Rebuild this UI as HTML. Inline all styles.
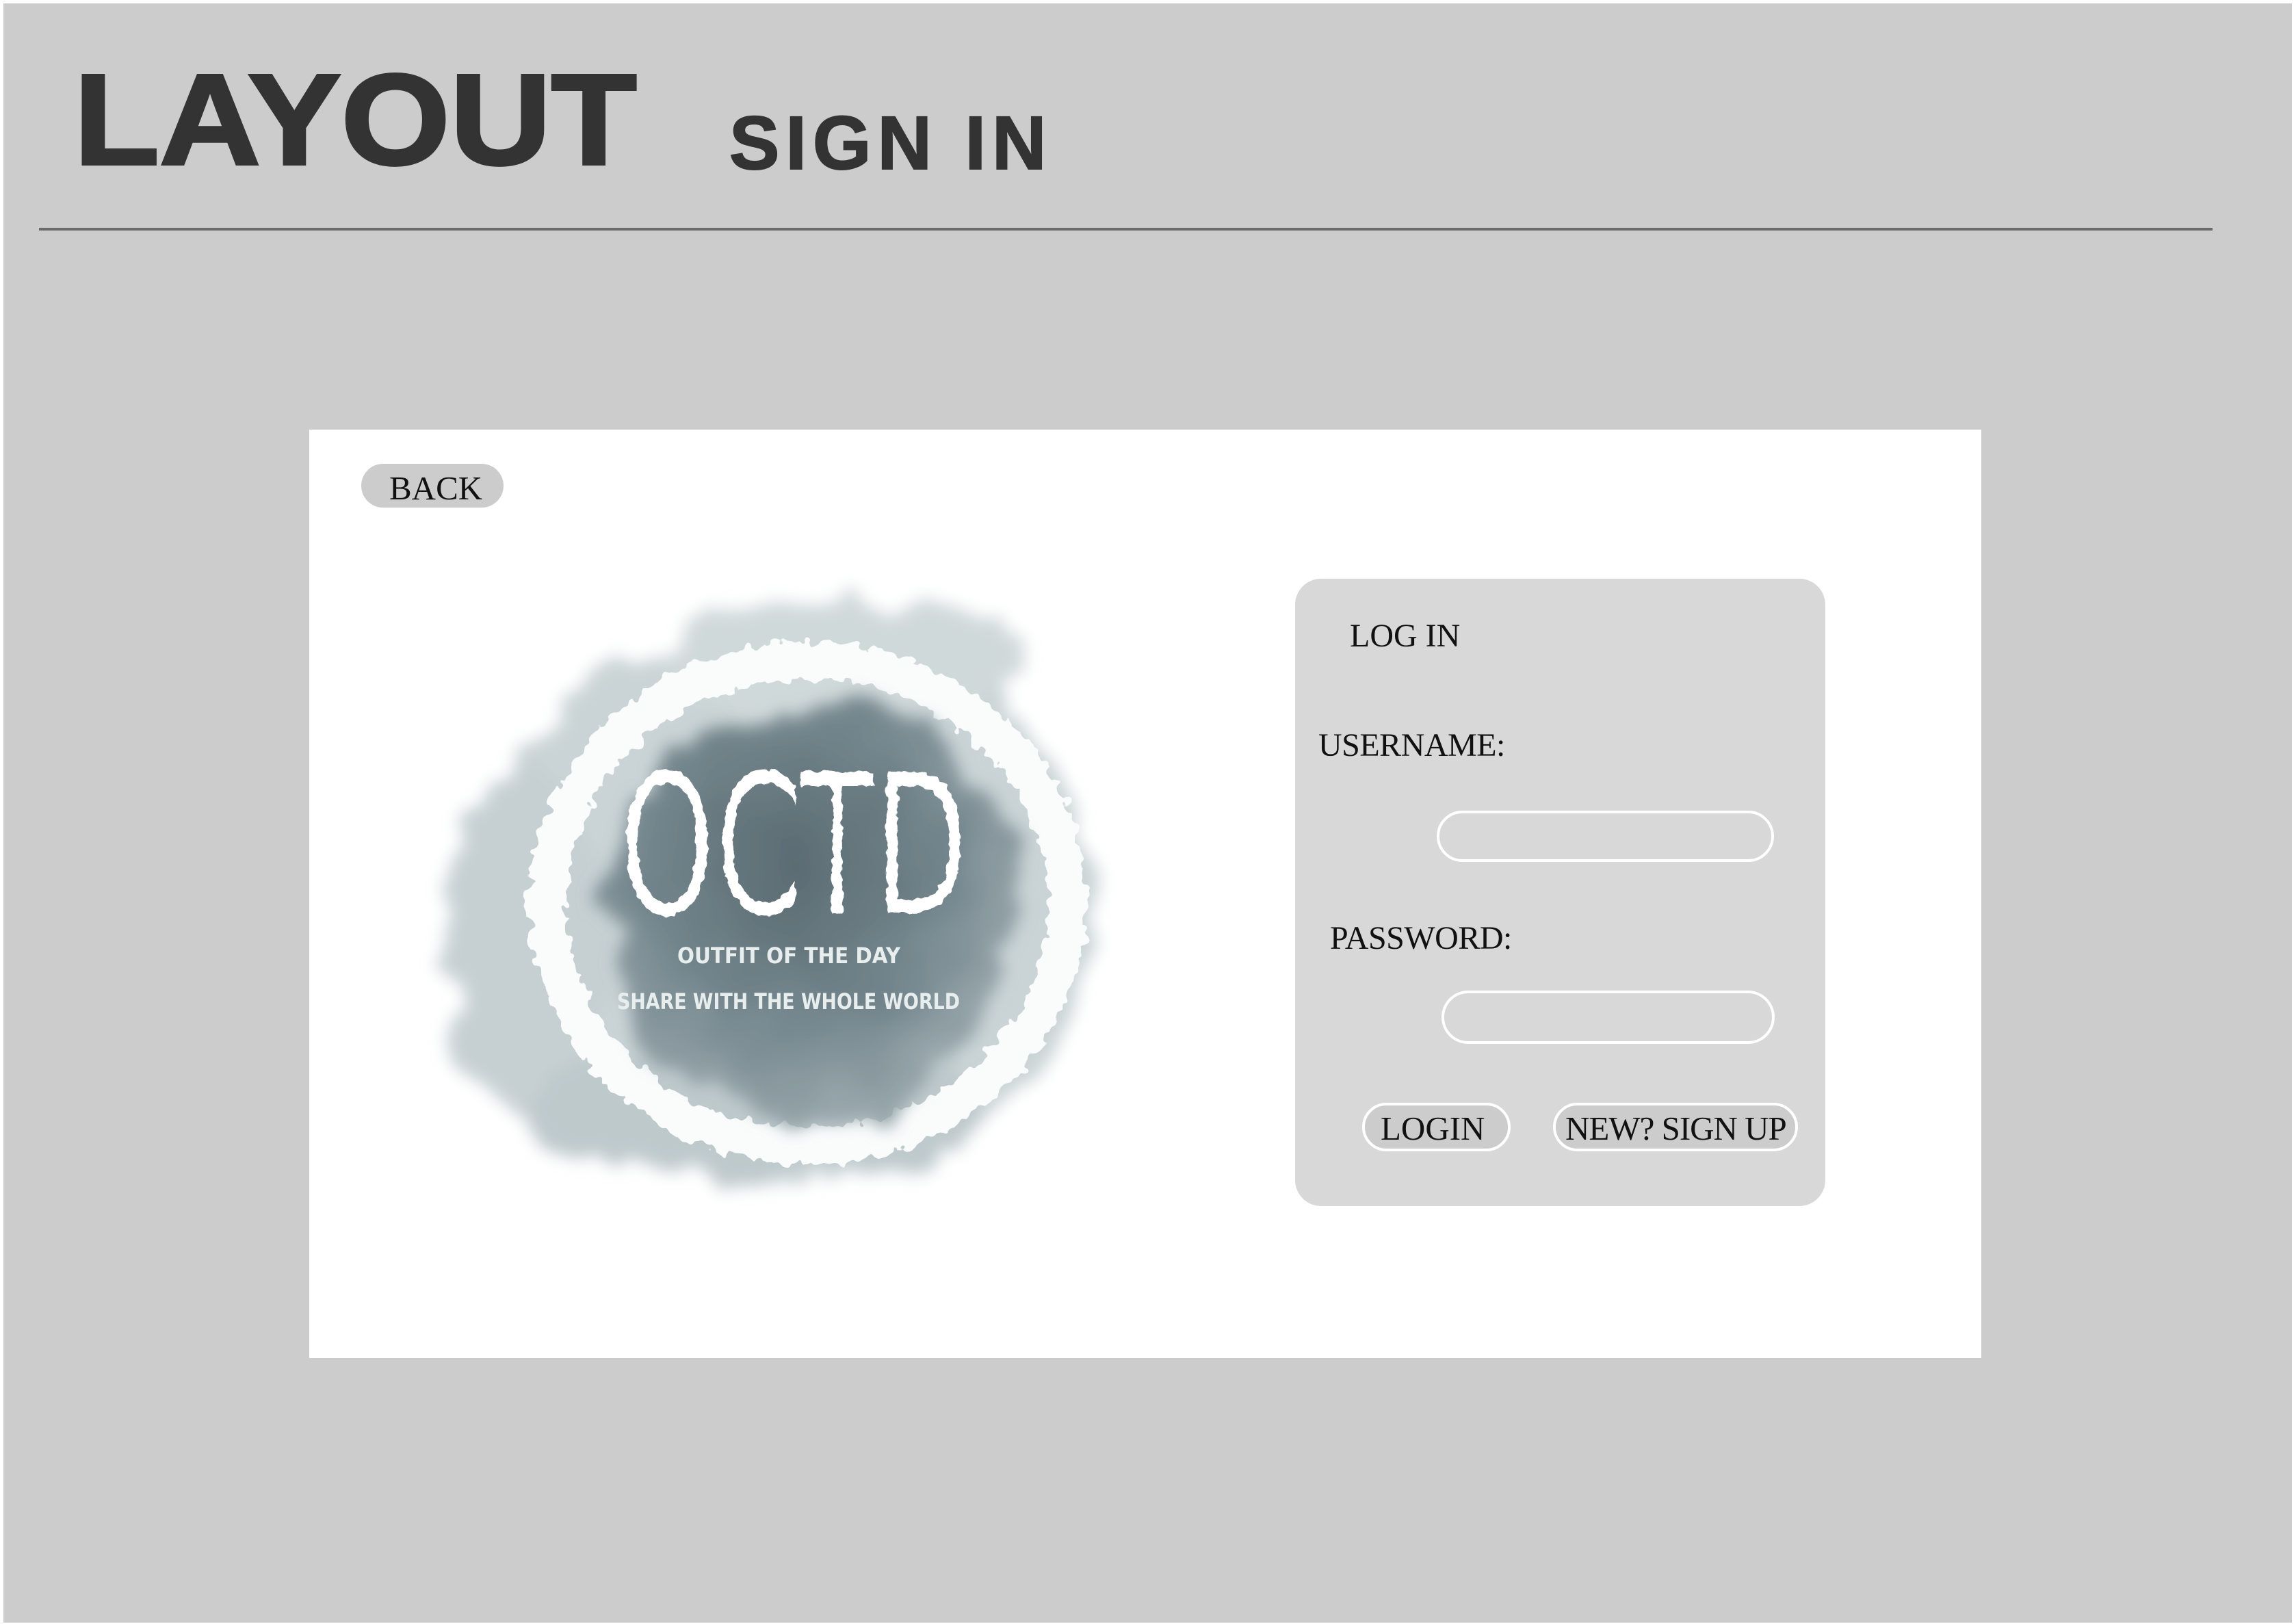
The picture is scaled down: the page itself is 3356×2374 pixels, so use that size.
<!DOCTYPE html>
<html><head><meta charset="utf-8"><style>
html,body{margin:0;padding:0;background:#fff;}
body{width:3356px;height:2374px;position:relative;overflow:hidden;font-family:"Liberation Serif",serif;}
.bg{position:absolute;left:5px;top:5px;width:3345px;height:2367px;background:#cccccc;}
.t1{position:absolute;left:108px;top:81px;font:bold 189px/1 "Liberation Sans",sans-serif;color:#333;transform:scaleX(1.083);transform-origin:left top;white-space:nowrap;-webkit-text-stroke:4px #333;}
.t2{position:absolute;left:1066px;top:155px;font:bold 110px/1 "Liberation Sans",sans-serif;color:#333;letter-spacing:9px;white-space:nowrap;-webkit-text-stroke:2px #333;}
.line{position:absolute;left:57px;top:333px;width:3177px;height:4px;background:#6b6b6b;}
.card{position:absolute;left:452px;top:628px;width:2444px;height:1357px;background:#fff;}
.back{position:absolute;left:528px;top:678px;width:208px;height:64px;border-radius:32px;background:#cccccc;}
.txt{position:absolute;color:#111;white-space:nowrap;line-height:1;font-family:"Liberation Serif",serif;}
.panel{position:absolute;left:1893px;top:846px;width:775px;height:917px;background:#d8d8d8;border-radius:38px;}
.inp{position:absolute;border:4px solid #fff;border-radius:40px;box-sizing:border-box;}
.btn{position:absolute;border:4px solid #fff;border-radius:40px;box-sizing:border-box;background:#cccccc;}
</style></head><body>
<div class="bg"></div>
<div class="t1">LAYOUT</div>
<div class="t2">SIGN IN</div>
<div class="line"></div>
<div class="card"></div>
<div class="back"></div>
<div class="txt" style="left:569px;top:689px;font-size:49px;">BACK</div>

<svg style="position:absolute;left:600px;top:820px" width="1100" height="960" viewBox="600 820 1100 960">
<defs>
<filter id="wc" x="-20%" y="-20%" width="140%" height="140%">
<feTurbulence type="fractalNoise" baseFrequency="0.012" numOctaves="3" seed="4" result="n"/>
<feDisplacementMap in="SourceGraphic" in2="n" scale="90" xChannelSelector="R" yChannelSelector="G" result="d"/>
<feGaussianBlur in="d" stdDeviation="12"/>
</filter>
<filter id="rough" x="-20%" y="-20%" width="140%" height="140%">
<feTurbulence type="fractalNoise" baseFrequency="0.05" numOctaves="2" seed="7" result="n"/>
<feDisplacementMap in="SourceGraphic" in2="n" scale="30" xChannelSelector="R" yChannelSelector="G"/>
</filter>
<filter id="rough2" x="-20%" y="-20%" width="140%" height="140%">
<feTurbulence type="fractalNoise" baseFrequency="0.08" numOctaves="2" seed="3" result="n"/>
<feDisplacementMap in="SourceGraphic" in2="n" scale="10" xChannelSelector="R" yChannelSelector="G"/>
</filter>
<radialGradient id="dk" cx="45%" cy="40%" r="60%">
<stop offset="0" stop-color="#5a6a71"/><stop offset="0.6" stop-color="#74868d"/><stop offset="1" stop-color="#98a7ac"/>
</radialGradient>
</defs>
<g filter="url(#wc)">
<ellipse cx="1150" cy="1320" rx="450" ry="420" fill="#cad4d6"/>
<ellipse cx="1230" cy="960" rx="260" ry="90" fill="#d0d9da"/>
<ellipse cx="770" cy="1380" rx="120" ry="250" fill="#c6d0d3"/>
<ellipse cx="1100" cy="1620" rx="330" ry="110" fill="#bec9cc"/>
</g>
<ellipse cx="1180" cy="1320" rx="380" ry="355" fill="none" stroke="#fafcfc" stroke-width="55" filter="url(#rough)"/>
<g filter="url(#wc)">
<ellipse cx="1190" cy="1330" rx="300" ry="310" fill="url(#dk)"/>
</g>
<g filter="url(#rough2)">
<text x="905" y="1330" font-family="DejaVu Sans, sans-serif" font-weight="200" font-size="270" textLength="510" lengthAdjust="spacingAndGlyphs" fill="#fff" stroke="#fff" stroke-width="10">OCTD</text>
</g>
<text x="990" y="1408" font-family="DejaVu Sans, sans-serif" font-weight="bold" font-size="32" fill="#e8eeee" textLength="326" lengthAdjust="spacingAndGlyphs">OUTFIT OF THE DAY</text>
<text x="902" y="1475" font-family="DejaVu Sans, sans-serif" font-weight="bold" font-size="32" fill="#e8eeee" textLength="501" lengthAdjust="spacingAndGlyphs">SHARE WITH THE WHOLE WORLD</text>
</svg>

<div class="panel"></div>
<div class="txt" style="left:1973px;top:906px;font-size:48px;">LOG IN</div>
<div class="txt" style="left:1927px;top:1066px;font-size:48px;letter-spacing:-0.5px;">USERNAME:</div>
<div class="inp" style="left:2100px;top:1185px;width:493px;height:75px;"></div>
<div class="txt" style="left:1944px;top:1348px;font-size:48px;letter-spacing:-0.5px;">PASSWORD:</div>
<div class="inp" style="left:2107px;top:1448px;width:487px;height:78px;"></div>
<div class="btn" style="left:1991px;top:1612px;width:217px;height:71px;"></div>
<div class="txt" style="left:2018px;top:1625px;font-size:49px;">LOGIN</div>
<div class="btn" style="left:2270px;top:1612px;width:358px;height:71px;"></div>
<div class="txt" style="left:2288px;top:1625px;font-size:49px;letter-spacing:-1px;">NEW? SIGN UP</div>
</body></html>
